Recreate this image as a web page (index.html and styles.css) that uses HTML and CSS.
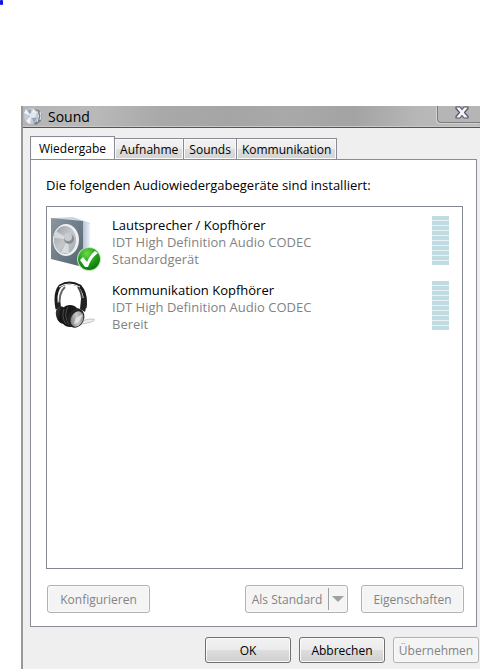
FILE: index.html
```
<!DOCTYPE html>
<html lang="de">
<head>
    <meta charset="UTF-8">
    <meta name="viewport" content="width=device-width, initial-scale=1.0">
    <title>Sound</title>
    <link rel="stylesheet" href="styles.css">
</head>
<body>
    <div class="marker"></div>
    <div class="window">
        <div class="titlebar">
            <svg class="title-icon" width="20" height="18" viewBox="0 0 20 18">
                <path d="M11 1l5 1 3 5-1 6-5 4-3-2z" fill="#78828c"/>
                <path d="M14 3q3 5 0 11M17 4q2 4 0 8" fill="none" stroke="#e8eef4" stroke-width="1"/>
                <ellipse cx="8" cy="8" rx="7" ry="8" fill="#c3ccd5"/>
                <path d="M8 8L1 5l2-4zM8 8l-1 8-4-3zM8 8l2-7 4 4z" fill="#eef4fa"/>
                <path d="M8 8l6 2-3 5zM8 8L4 2l4-1z" fill="#9ba6b3"/>
                <circle cx="10" cy="7" r="3" fill="#dfe7ef"/>
            </svg>
            <span class="title">Sound</span>
            <button type="button" class="close" aria-label="Schließen">
                <svg width="14" height="13" viewBox="0 0 14 13">
                    <path d="M1 1h4l2 2.500 2-2.500h4v1.500l-3.500 4 3.500 4V12H9L7 9.500 5 12H1v-1.500l3.500-4L1 2.500z" fill="#f4f4f4" stroke="#53566a" stroke-width="1.200" stroke-linejoin="round"/>
                </svg>
            </button>
        </div>
        <div class="content">
            <div class="tabs" role="tablist">
                <button type="button" class="tab active" role="tab" aria-selected="true">Wiedergabe</button>
                <button type="button" class="tab" role="tab">Aufnahme</button>
                <button type="button" class="tab" role="tab">Sounds</button>
                <button type="button" class="tab" role="tab">Kommunikation</button>
            </div>
            <div class="panel">
                <p class="intro">Die folgenden Audiowiedergabegeräte sind installiert:</p>
                <ul class="devices">
                    <li class="device">
                        <svg class="device-icon" width="52" height="56" viewBox="0 0 52 56">
                            <defs>
                                <linearGradient id="side" x1="0" y1="0" x2="1" y2="0">
                                    <stop offset="0" stop-color="#b5c2d3"/>
                                    <stop offset="1" stop-color="#eef3f9"/>
                                </linearGradient>
                                <linearGradient id="front" x1="0" y1="0" x2="1" y2="1">
                                    <stop offset="0" stop-color="#8a97a1"/>
                                    <stop offset="1" stop-color="#53626f"/>
                                </linearGradient>
                                <linearGradient id="cone" x1="0" y1="0" x2="1" y2="1">
                                    <stop offset="0" stop-color="#989da2"/>
                                    <stop offset="0.500" stop-color="#c4c8cc"/>
                                    <stop offset="1" stop-color="#a4a9ae"/>
                                </linearGradient>
                                <radialGradient id="ok" cx="0.400" cy="0.250" r="0.800">
                                    <stop offset="0" stop-color="#70d94d"/>
                                    <stop offset="0.500" stop-color="#24a51c"/>
                                    <stop offset="1" stop-color="#087205"/>
                                </radialGradient>
                            </defs>
                            <path d="M2 2l20-1 17 6v35l-7 7z" fill="#cbd6e3"/>
                            <path d="M32 5l7 3v33l-7 8z" fill="url(#side)"/>
                            <path d="M0 2l32 3v46L0 43z" fill="url(#front)"/>
                            <ellipse cx="15" cy="24" rx="13" ry="16" fill="#edf0f2"/>
                            <ellipse cx="14" cy="24" rx="11" ry="14" fill="url(#cone)"/>
                            <path d="M17 23L5 15l-2 7zM17 23l-7 14 8 0z" fill="#eef0f2" opacity="0.600"/>
                            <circle cx="18" cy="23" r="5" fill="#868d93"/>
                            <circle cx="17" cy="21" r="4" fill="#c9cdd0"/>
                            <circle cx="38" cy="43" r="12" fill="#bfe6b8"/>
                            <circle cx="38" cy="43" r="11" fill="url(#ok)"/>
                            <path d="M29 44l3-3 4 5q3-7 8-11l3 2q-7 5-10 14h-3z" fill="#fff"/>
                        </svg>
                        <div class="device-text">
                            <div class="device-name">Lautsprecher / Kopfhörer</div>
                            <div>IDT High Definition Audio CODEC</div>
                            <div>Standardgerät</div>
                        </div>
                        <div class="meter"></div>
                    </li>
                    <li class="device">
                        <svg class="device-icon" width="52" height="56" viewBox="0 0 52 56">
                            <defs>
                                <linearGradient id="pad" x1="0" y1="0" x2="1" y2="1">
                                    <stop offset="0" stop-color="#4c4c4c"/>
                                    <stop offset="0.500" stop-color="#101010"/>
                                    <stop offset="1" stop-color="#3d3d3d"/>
                                </linearGradient>
                                <linearGradient id="cap" x1="0" y1="1" x2="1" y2="0">
                                    <stop offset="0" stop-color="#5e5e5e"/>
                                    <stop offset="0.500" stop-color="#c9c9c9"/>
                                    <stop offset="1" stop-color="#777777"/>
                                </linearGradient>
                            </defs>
                            <path d="M28 43q4-5 14-5 4 1-2 3-5 2-12 2z" fill="#eeeeee" stroke="#c4c4c4" stroke-width="1"/>
                            <path d="M6 28Q3 12 9 5q9-6 20 0 7 8 5 22" fill="none" stroke="#1b1b1b" stroke-width="3"/>
                            <path d="M9 27Q7 12 14 6" fill="none" stroke="#666" stroke-width="2"/>
                            <path d="M8 6q10-6 21 0" fill="none" stroke="#fff" stroke-width="1"/>
                            <path d="M27 6q5 7 4 18" fill="none" stroke="#444" stroke-width="2"/>
                            <path d="M30 18l5-2 1 6-2 9-5-3z" fill="#222"/>
                            <path d="M5 22l4-1 1 8-3 3z" fill="#222"/>
                            <ellipse cx="11" cy="34" rx="6" ry="9" transform="rotate(-15 11 34)" fill="url(#pad)"/>
                            <ellipse cx="19" cy="35" rx="10" ry="11" fill="#181818"/>
                            <path d="M13 28q-3 8 2 15M17 26q-5 8 1 18" fill="none" stroke="#4b4b4b" stroke-width="1"/>
                            <ellipse cx="25" cy="37" rx="8" ry="10" transform="rotate(25 25 37)" fill="#242424"/>
                            <ellipse cx="26" cy="38" rx="6" ry="8" transform="rotate(28 26 38)" fill="url(#cap)"/>
                            <path d="M25 37l7-4-4 8-5 2z" fill="#e0e0e0"/>
                        </svg>
                        <div class="device-text">
                            <div class="device-name">Kommunikation Kopfhörer</div>
                            <div>IDT High Definition Audio CODEC</div>
                            <div>Bereit</div>
                        </div>
                        <div class="meter"></div>
                    </li>
                </ul>
                <div class="actions">
                    <button type="button" class="btn configure" disabled>Konfigurieren</button>
                    <button type="button" class="btn split" disabled>
                        <span class="split-label">Als Standard</span>
                        <span class="arrow"></span>
                    </button>
                    <button type="button" class="btn" disabled>Eigenschaften</button>
                </div>
            </div>
        </div>
        <div class="footer">
            <button type="button" class="btn">OK</button>
            <button type="button" class="btn">Abbrechen</button>
            <button type="button" class="btn" disabled>Übernehmen</button>
        </div>
    </div>
</body>
</html>
```

FILE: styles.css
```
* {
    box-sizing: border-box;
}
body {
    display: flex;
    flex-direction: column;
    min-height: 100vh;
    margin: 0;
    padding: 106px 0 0 21px;
    background-color: #ffffff;
    font-family: "Open Sans", "Noto Sans", sans-serif;
    font-size: 13px;
    line-height: 17px;
    color: #000000;
}
button {
    font: inherit;
    font-size: 12px;
    color: inherit;
    padding: 0;
    white-space: nowrap;
}
.marker {
    position: absolute;
    top: 0;
    left: 0;
    width: 3px;
    height: 5px;
    border-radius: 1px;
    background-color: #1010f0;
}
.window {
    flex: 1;
    display: flex;
    flex-direction: column;
    border-left: 2px solid #999999;
    background-color: #efefef;
}
.titlebar {
    display: flex;
    align-items: center;
    height: 22px;
    border-bottom: 1px solid #555555;
    box-shadow: inset 0 -1px #c9c9c9;
    background: linear-gradient(100deg, #b4b4b4 0%, #b9b9b9 16%, #a9a9a9 30%, #a5a5a5 45%, #a9a9a9 58%, #a3a3a3 72%, #b7b7b7 86%, #bcbcbc 100%);
}
.title-icon {
    margin-right: 5px;
}
.title {
    flex: 1;
    font-size: 14px;
}
.close {
    align-self: flex-start;
    display: flex;
    justify-content: center;
    width: 43px;
    height: 17px;
    padding-left: 6px;
    border: 1px solid #7d7d7d;
    border-width: 0 0 1px 1px;
    border-radius: 0 0 0 4px;
    box-shadow: -1px 1px #d2d2d2;
    background-color: #b5b5b5;
}
.content {
    flex: 1;
    display: flex;
    flex-direction: column;
    padding: 8px 3px 0 7px;
}
.tabs {
    display: flex;
    align-items: flex-end;
    height: 24px;
    margin-bottom: -1px;
}
.tab {
    height: 22px;
    margin-left: -1px;
    padding: 0 5px;
    border: 1px solid #898c95;
    background: linear-gradient(#f3f3f3 0%, #ececec 48%, #dddddd 52%, #d3d3d3 100%);
    box-shadow: inset 0 0 0 1px #fafafa;
}
.tab.active {
    height: 24px;
    margin-left: 0;
    padding: 0 8px;
    border-bottom: none;
    background: #ffffff;
}
.panel {
    flex: 1;
    display: flex;
    flex-direction: column;
    padding: 17px 13px 13px 15px;
    border: 1px solid #898c95;
    background-color: #ffffff;
}
.intro {
    margin: 0 0 12px;
}
.devices {
    flex: 1;
    min-height: 200px;
    margin: 0;
    padding: 9px 13px 0 4px;
    border: 1px solid #828790;
    list-style: none;
}
.device {
    display: flex;
    height: 65px;
    color: #838383;
}
.device-icon {
    margin-right: 9px;
}
.device-text {
    flex: 1;
    padding-top: 1px;
}
.device-name {
    color: #000000;
}
.meter {
    width: 17px;
    height: 49px;
    background: repeating-linear-gradient(#c1dbe2 0, #c1dbe2 4px, #eaf4f6 4px, #eaf4f6 5px);
}
.actions {
    display: flex;
    gap: 13px;
    padding: 16px 0 0 1px;
    margin-right: -1px;
}
.btn {
    width: 86px;
    height: 26px;
    border: 1px solid #707070;
    border-radius: 3px;
    background: linear-gradient(#f2f2f2 0%, #ebebeb 49%, #dddddd 51%, #cfcfcf 100%);
    box-shadow: inset 0 0 0 1px #fafafa;
}
.btn:disabled {
    border-color: #adb2b5;
    background: #f4f4f4;
    color: #838383;
}
.actions .btn {
    width: 103px;
    height: 28px;
}
.configure {
    margin-right: auto;
}
.split {
    display: flex;
    align-items: center;
}
.split-label {
    flex: 1;
}
.arrow {
    display: flex;
    align-items: center;
    justify-content: center;
    width: 19px;
    height: 22px;
    border-left: 1px solid #a0a0a0;
}
.arrow::before {
    content: "";
    border: 6px solid transparent;
    border-top-color: #a0a0a0;
    border-bottom: none;
}
.footer {
    display: flex;
    justify-content: flex-end;
    gap: 8px;
    padding: 10px 1px 6px 0;
}
```
